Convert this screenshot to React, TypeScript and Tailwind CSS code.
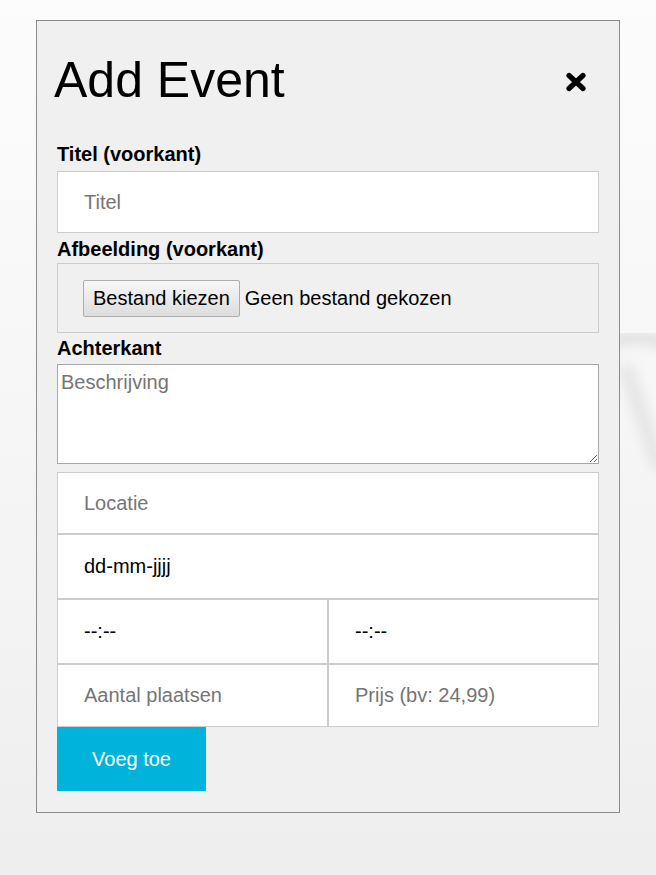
import React from "react";

const field =
  "block w-full bg-white border border-[#cccccc] pl-[26px] pr-3 text-[20px] text-black outline-none placeholder:text-[#757575]";

function CloseIcon() {
  return (
    <svg width="22" height="20" viewBox="0 0 22 20" aria-hidden="true">
      <path
        d="M4 3.5 L18 16.5 M18 3.5 L4 16.5"
        stroke="#000"
        strokeWidth="5.2"
        strokeLinecap="round"
        fill="none"
      />
    </svg>
  );
}

export default function App() {
  return (
    <div className="relative min-h-[875px] w-full overflow-hidden bg-gradient-to-b from-[#fcfcfc] via-[#f6f6f6] to-[#eeeeee] pt-[20px] font-['Liberation_Sans',Arial,sans-serif] text-black">
      {/* faint background swoosh */}
      <svg
        className="pointer-events-none absolute left-0 top-0"
        width="656"
        height="875"
        aria-hidden="true"
      >
        <defs>
          <filter id="soft" x="-20%" y="-20%" width="140%" height="140%">
            <feGaussianBlur stdDeviation="6" />
          </filter>
        </defs>
        <path
          d="M600 345 C 640 330, 670 340, 690 360"
          stroke="#e2e2e2"
          strokeWidth="14"
          fill="none"
          filter="url(#soft)"
        />
        <path
          d="M625 365 L 660 470"
          stroke="#e6e6e6"
          strokeWidth="16"
          fill="none"
          filter="url(#soft)"
        />
      </svg>

      <div className="relative mx-auto w-[584px] border border-[#8a8a8a] bg-[#f0f0f0] px-[20px] pb-[21px] pt-[30px]">
        <div className="flex items-center justify-between">
          <h1 className="-ml-[3px] text-[50px] font-normal leading-[58px]">Add Event</h1>
          <button className="mr-[12px] mt-[4px]">
            <CloseIcon />
          </button>
        </div>

        <form className="flex flex-col" onSubmit={(e) => e.preventDefault()}>
          <label className="mt-[34px] text-[20px] font-bold leading-[23px]">Titel (voorkant)</label>
          <input className={`${field} mt-[5px] h-[62px]`} placeholder="Titel" />

          <label className="mt-[5px] text-[20px] font-bold leading-[23px]">Afbeelding (voorkant)</label>
          <div className="mt-[2px] flex h-[70px] items-center border border-[#cccccc] pl-[25px] text-[20px]">
            <button
              type="button"
              className="rounded-[2px] border border-[#adadad] bg-gradient-to-b from-[#f7f7f7] to-[#dddddd] px-[9px] py-[6px] leading-[23px]"
            >
              Bestand kiezen
            </button>
            <span className="ml-[5px]">Geen bestand gekozen</span>
          </div>

          <label className="mt-[4px] text-[20px] font-bold leading-[23px]">Achterkant</label>
          <textarea
            className="mt-[4px] block h-[100px] w-full border border-[#a9a9a9] bg-white px-[3px] pt-[6px] text-[20px] leading-[23px] outline-none placeholder:text-[#757575]"
            placeholder="Beschrijving"
          />

          <input className={`${field} mt-[8px] h-[62px]`} placeholder="Locatie" />
          <input className={`${field} h-[65px] placeholder:text-black`} placeholder="dd-mm-jjjj" />
          <div className="grid grid-cols-2">
            <input className={`${field} h-[65px] placeholder:text-black`} placeholder="--:--" />
            <input className={`${field} h-[65px] placeholder:text-black`} placeholder="--:--" />
          </div>
          <div className="grid grid-cols-2">
            <input className={`${field} h-[63px]`} placeholder="Aantal plaatsen" />
            <input className={`${field} h-[63px]`} placeholder="Prijs (bv: 24,99)" />
          </div>

          <div>
            <button
              type="submit"
              className="h-[64px] w-[149px] bg-[#00b3da] text-[20px] text-white"
            >
              Voeg toe
            </button>
          </div>
        </form>
      </div>
    </div>
  );
}
